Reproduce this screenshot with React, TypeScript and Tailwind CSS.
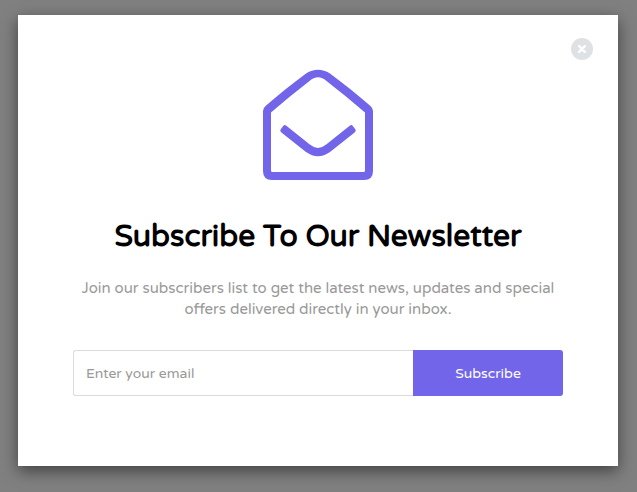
import React from "react";

function EnvelopeIcon() {
  return (
    <svg width="110" height="112" viewBox="0 0 110 112" fill="#7265ea" className="block">
      <path
        fillRule="evenodd"
        d="M0 102V42Q0 39 2.800 36.700C15 26 29 15 43 4.500Q55-3 67 4.500C81 15 95 26 107.200 36.700Q110 39 110 42V102Q110 111 101 111H9Q0 111 0 102ZM8 43.500V101.500Q8 103 9.500 103H100.500Q102 103 102 101.500V43.500C90 33 77 22.500 63.500 12Q55 4.500 46.500 12C33 22.500 20 33 8 43.500Z"
      />
      <path d="M23 56.600L46.500 75.300Q55 82.500 63.500 75.300L87 56.600Q88.500 55.400 89.800 56.900L92.300 60.300Q93.400 61.900 91.900 63.200L67 83Q55 91.500 43 83L18.100 63.200Q16.600 61.900 17.700 60.300L20.200 56.900Q21.500 55.400 23 56.600Z" />
    </svg>
  );
}

export default function App() {
  return (
    <main className="flex h-[492px] w-[637px] items-start bg-[#808080] pt-[15px] pl-[18px] font-['Varela_Round','Noto_Sans',sans-serif]">
      <section className="flex h-[451px] w-[600px] flex-col bg-white px-[55px] pt-[23px] shadow-[0_5px_15px_rgba(0,0,0,0.5)]">
        <button aria-label="Close" className="-mr-[30px] flex size-[22px] items-center justify-center self-end rounded-full bg-[#dfe2e4]">
          <svg width="8" height="8" viewBox="0 0 8 8" stroke="white" strokeWidth="2.400" strokeLinecap="round">
            <path d="M1.200 1.200l5.600 5.600M6.800 1.200L1.200 6.800" />
          </svg>
        </button>
        <div className="mt-[9px] flex justify-center">
          <EnvelopeIcon />
        </div>
        <h1 className="mt-[38px] text-center text-[30px] leading-[36px] font-bold whitespace-nowrap text-black">
          Subscribe To Our Newsletter
        </h1>
        <p className="mt-[23px] text-center text-[15px] leading-[21px] whitespace-nowrap text-[#999]">
          Join our subscribers list to get the latest news, updates and special
          <br />
          offers delivered directly in your inbox.
        </p>
        <form className="mt-[30px] flex h-[46px]">
          <input
            type="email"
            placeholder="Enter your email"
            className="w-[340px] rounded-l-[3px] border border-r-0 border-[#dbdbdb] px-3 text-[14px] placeholder:text-[#999]"
          />
          <button type="button" className="w-[150px] rounded-r-[3px] bg-[#7265ea] text-[14px] text-white">
            Subscribe
          </button>
        </form>
      </section>
    </main>
  );
}
